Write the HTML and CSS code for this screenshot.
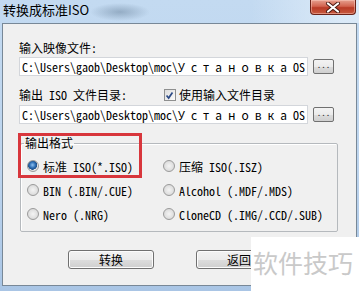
FILE: index.html
```html
<!DOCTYPE html>
<html>
	<head>
		<meta charset="utf-8" />
		<title>转换成标准ISO</title>
		<link rel="stylesheet" href="styles.css">
	</head>
	<body>
		<div class="window">
			<div class="titlebar">
				<span class="title">转换成标准ISO</span>
				<span class="close">
					<svg width="16" height="11" viewBox="0 0 16 11">
						<path d="M3 1.5 L13 9.5 M13 1.5 L3 9.5" stroke="#4a1810" stroke-width="4" stroke-linecap="round"/>
						<path d="M3 1.5 L13 9.5 M13 1.5 L3 9.5" stroke="#fff" stroke-width="2.2" stroke-linecap="round"/>
					</svg>
				</span>
			</div>
			<div class="client">
				<div class="label">输入映像文件:</div>
				<div class="pathrow">
					<div class="input">C:\Users\gaob\Desktop\moc\<span class="ru">Установка</span>OS</div>
					<div class="browse">...</div>
				</div>
				<div class="row2">
					<span class="label wide">输出 ISO 文件目录:</span>
					<span class="check">
						<svg width="13" height="13" viewBox="0 0 13 13">
							<path d="M3 6.5 L5.5 9.5 L10 3" fill="none" stroke="#2c4a86" stroke-width="2"/>
						</svg>
					</span>
					<span class="label">使用输入文件目录</span>
				</div>
				<div class="pathrow">
					<div class="input">C:\Users\gaob\Desktop\moc\<span class="ru">Установка</span>OS</div>
					<div class="browse">...</div>
				</div>
				<fieldset class="group">
					<legend>输出格式</legend>
					<div class="opts">
						<div class="opt"><i class="radio on"></i>标准 ISO(*.ISO)</div>
						<div class="opt"><i class="radio"></i>压缩 ISO(.ISZ)</div>
						<div class="opt"><i class="radio"></i>BIN (.BIN/.CUE)</div>
						<div class="opt"><i class="radio"></i>Alcohol (.MDF/.MDS)</div>
						<div class="opt"><i class="radio"></i>Nero (.NRG)</div>
						<div class="opt"><i class="radio"></i>CloneCD (.IMG/.CCD/.SUB)</div>
					</div>
				</fieldset>
				<div class="buttons">
					<span class="btn">转换</span>
					<span class="btn">返回</span>
				</div>
			</div>
			<div class="mark">软件技巧</div>
			<div class="redbox"></div>
		</div>
	</body>
</html>
```

FILE: styles.css
```css
*{margin: 0;padding: 0;box-sizing: border-box;}
body{width: 359px;height: 291px;overflow: hidden;}
.window{position: relative;width: 359px;height: 291px;
	background: linear-gradient(180deg, #c3daf1 0%, #bcd4ee 60%, #a9c5e5 100%);
	font-family: "Noto Sans Mono CJK SC", "Noto Sans CJK SC", monospace;font-size: 12px;color: #000;}
.titlebar{height: 23px;display: flex;justify-content: space-between;align-items: flex-start;
	background: radial-gradient(ellipse 30px 9px at 120px 12px, rgba(110,135,160,0.55), rgba(110,135,160,0) 100%),
	linear-gradient(90deg, rgba(255,255,255,0) 70%, rgba(235,244,252,0.6) 95%);}
.title{font-family: "Noto Sans CJK SC", sans-serif;font-size: 13px;line-height: 18px;margin-left: 3px;margin-top: 1px;color: #000;}
.close{width: 46px;height: 15px;margin-right: 3px;display: flex;align-items: center;justify-content: center;
	border: 1px solid #6b2218;border-top: none;border-radius: 0 0 4px 4px;
	background: linear-gradient(180deg, #e6a08f 0%, #d2634f 45%, #b93a26 55%, #c75a3f 100%);
	box-shadow: inset 0 0 0 1px rgba(255,210,200,0.45);}
.client{margin: 0 2px;height: 263px;border: 1px solid #788897;background: #f0f0f0;padding: 17px 0 0 16px;}
.label{line-height: 14px;height: 14px;white-space: nowrap;}
.pathrow{display: flex;align-items: center;margin-top: 2px;}
.row2{display: flex;align-items: center;margin-top: 12px;}
.row2 + .pathrow{margin-top: 3px;}
.wide{width: 145px;}
.input{width: 289px;height: 19px;background: #fff;border: 1px solid #d3d6db;padding-left: 2px;
	line-height: 17px;white-space: nowrap;overflow: hidden;}
.ru{letter-spacing: 6px;}
.browse{width: 21px;height: 15px;margin-left: 5px;border: 1px solid #707070;border-radius: 2px;
	background: linear-gradient(180deg, #f3f3f3 0%, #ebebeb 50%, #dddddd 51%, #cfcfcf 100%);
	font-size: 9px;line-height: 9px;text-align: center;color: #333;letter-spacing: 0;}
.check{width: 12px;height: 12px;margin-right: 3px;border: 1px solid #8e8f8f;display: flex;
	background: linear-gradient(135deg, #dcdcdc, #fbfbfb);}
.check svg{margin: -1px 0 0 -1px;}
.group{margin: 12px 0 0 1px;width: 318px;border: 1px solid #b5b9bd;border-radius: 2px;padding: 0 6px 5px 6px;
	box-shadow: 1px 1px 0 #fff inset;}
.group legend{margin-left: -3px;padding: 0 1px;line-height: 14px;}
.opts{display: grid;grid-template-columns: 136px 1fr;grid-auto-rows: 24px;padding-top: 4px;}
.opt{display: flex;align-items: center;white-space: nowrap;}
.radio{width: 12px;height: 12px;border-radius: 50%;margin-right: 4px;border: 1px solid #9a9a9a;
	background: radial-gradient(circle at 50% 50%, #f4f4f4 0%, #dcdcdc 70%, #cfcfcf 100%);}
.radio.on{background: radial-gradient(circle at 45% 40%, #8fc1f0 0%, #2f6fb5 35%, #1d4d86 55%, #e8e8e8 60%, #d4d4d4 100%);}
.buttons{display: flex;gap: 42px;margin: 18px 0 0 49px;}
.btn{width: 86px;height: 19px;border: 1px solid #707070;border-radius: 3px;text-align: center;line-height: 17px;
	background: linear-gradient(180deg, #f2f2f2 0%, #ebebeb 50%, #dddddd 51%, #cfcfcf 100%);
	box-shadow: inset 0 0 0 1px #fcfcfc;}
.mark{position: absolute;right: 0;bottom: 0;width: 108px;height: 54px;background: #fff;
	font-family: "Noto Sans CJK SC", sans-serif;font-size: 25px;line-height: 50px;color: #c9c9c9;padding-left: 2px;}
.redbox{position: absolute;left: 18px;top: 133px;width: 124px;height: 45px;border: 3px solid #d8363c;}
```
